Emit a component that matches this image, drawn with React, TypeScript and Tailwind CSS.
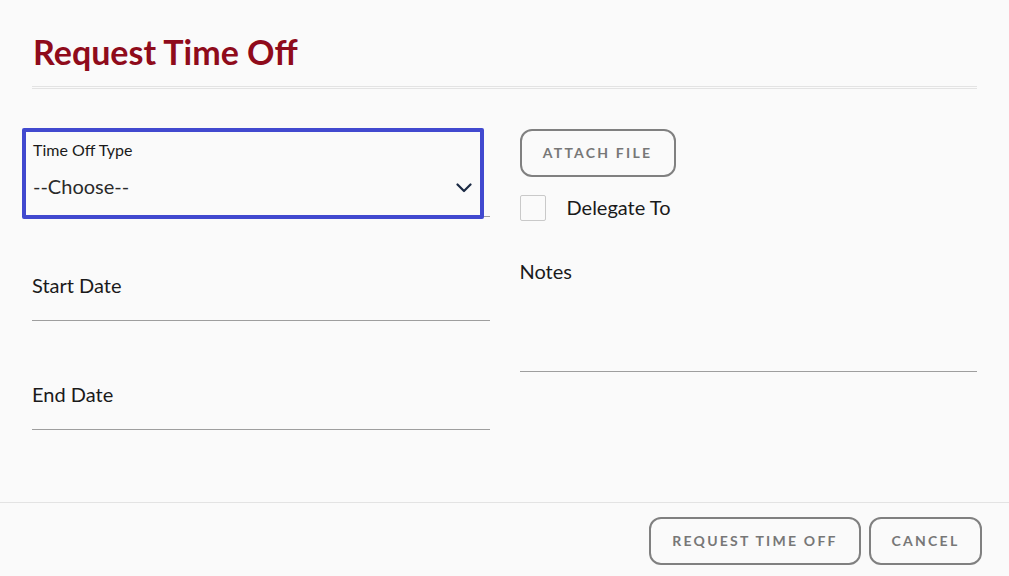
import React from 'react';

const font = { fontFamily: 'Lato, "Open Sans", sans-serif' };

function OutlineButton({ children, className = '' }: { children: React.ReactNode; className?: string }) {
  return (
    <button
      type="button"
      className={`h-[48px] rounded-[12px] border-2 border-[#808080] bg-transparent pb-[2px] text-[14px] font-bold uppercase tracking-[0.16em] text-[#777777] ${className}`}
    >
      {children}
    </button>
  );
}

function UnderlineField({ label, height }: { label: string; height: string }) {
  return (
    <div className={`flex flex-col justify-end border-b border-[#9e9e9e] pb-[23px] ${height}`}>
      <span className="text-[20px] leading-[24px] text-[#1a1a1a]">{label}</span>
    </div>
  );
}

export default function App() {
  return (
    <div className="flex h-[576px] w-full flex-col bg-[#fafafa]" style={font}>
      <div className="px-[32px]">
        <h1 className="mt-[32px] pl-px text-[34px] font-bold leading-[40px] text-[#8f0b1b]">Request Time Off</h1>
        <div className="mt-[14px] h-[3px] border-y border-[#e3e3e3]" />
      </div>

      <div className="flex gap-[30px] px-[32px] pt-[39px]">
        {/* left column */}
        <div className="flex w-[458px] flex-col">
          <div className="relative flex h-[89px] flex-col border-b border-[#9e9e9e] pb-[18px] pl-px pt-[12px]">
            <span className="text-[16px] leading-[19px] text-[#1a1a1a]">Time Off Type</span>
            <div className="mt-auto flex items-center justify-between pr-[18px]">
              <span className="text-[20px] leading-[24px] text-[#2a2a2a]">--Choose--</span>
              <svg width="16" height="10" viewBox="0 0 16 10" fill="none" className="mt-[4px]">
                <path d="M1.5 1.5 L8 8 L14.5 1.5" stroke="#1b2a44" strokeWidth="2.2" strokeLinecap="round" strokeLinejoin="round" />
              </svg>
            </div>
            <div className="pointer-events-none absolute -bottom-[3px] -left-[10px] right-[6px] top-0 rounded-[2px] border-4 border-[#4149cf]" />
          </div>
          <UnderlineField label="Start Date" height="h-[104px]" />
          <UnderlineField label="End Date" height="h-[109px]" />
        </div>

        {/* right column */}
        <div className="flex w-[458px] flex-col">
          <OutlineButton className="mt-[1px] w-[156px]">Attach File</OutlineButton>
          <label className="mt-[18px] flex h-[26px] items-center gap-[21px]">
            <span className="h-[26px] w-[26px] rounded-[2px] border border-[#c9c9c9] bg-[#fafafa]" />
            <span className="-mt-[3px] text-[20px] leading-[24px] text-[#1a1a1a]">Delegate To</span>
          </label>
          <div className="mt-[38px] h-[113px] border-b border-[#9e9e9e]">
            <span className="text-[20px] leading-[24px] text-[#1a1a1a]">Notes</span>
          </div>
        </div>
      </div>

      <div className="mt-auto flex h-[74px] justify-end gap-[8px] border-t border-[#e3e3e3] pr-[27px] pt-[14px]">
        <OutlineButton className="w-[212px]">Request Time Off</OutlineButton>
        <OutlineButton className="w-[113px]">Cancel</OutlineButton>
      </div>
    </div>
  );
}
